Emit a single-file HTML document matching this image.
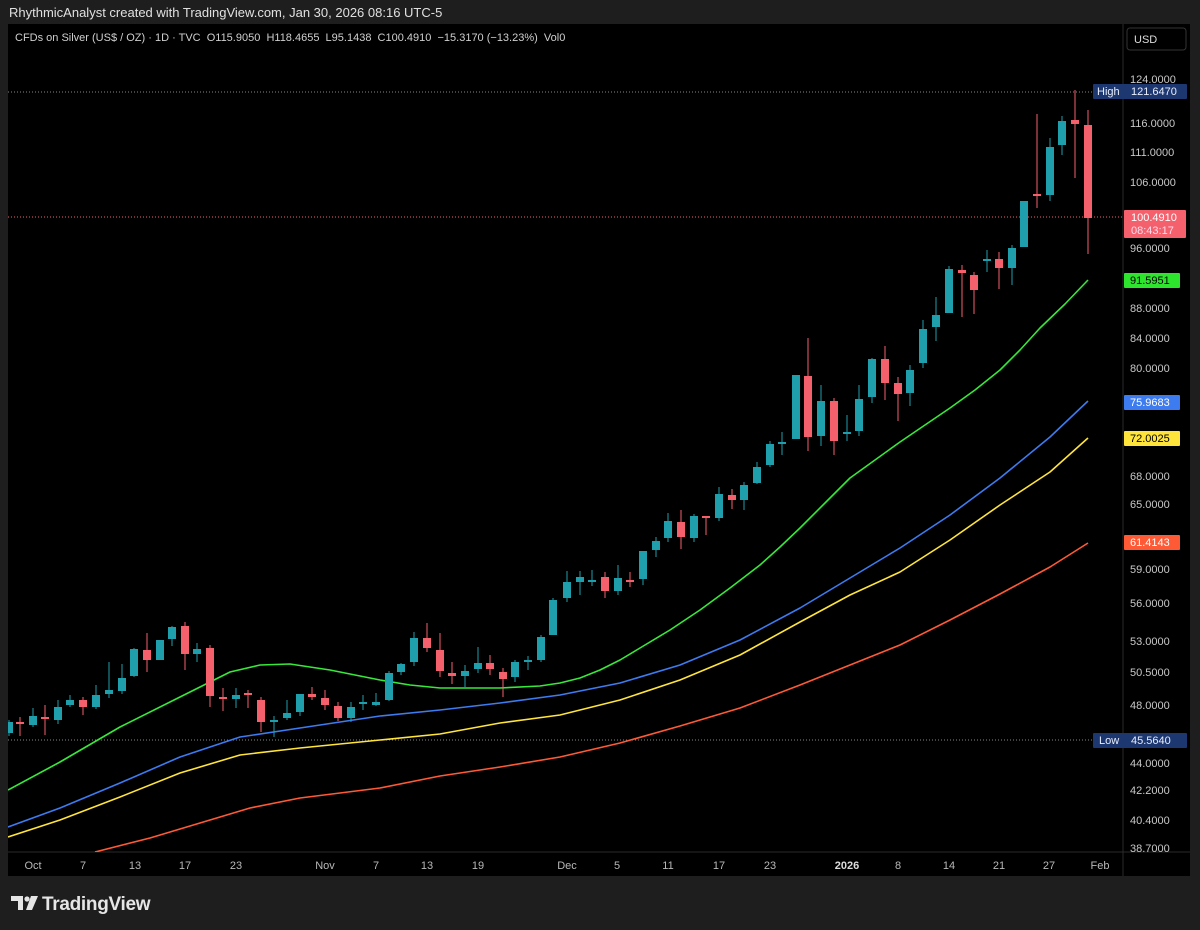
<!DOCTYPE html>
<html><head><meta charset="utf-8"><style>
body{margin:0;width:1200px;height:930px;background:#1e1e1e;overflow:hidden;font-family:"Liberation Sans",sans-serif}
.t{position:absolute;white-space:nowrap}
</style></head><body>
<div class="t" style="left:9px;top:5px;font-size:13px;color:#e0e0e0">RhythmicAnalyst created with TradingView.com, Jan 30, 2026 08:16 UTC-5</div>
<div style="position:absolute;left:8px;top:24px;width:1182px;height:852px;background:#000"></div>
<svg id="c" width="1200" height="930" style="position:absolute;left:0;top:0" xmlns="http://www.w3.org/2000/svg">
<defs><clipPath id="pl"><rect x="8" y="24" width="1115" height="828"/></clipPath></defs>
<line x1="1123" y1="24" x2="1123" y2="876" stroke="#2a2a2a"/>
<line x1="8" y1="852" x2="1190" y2="852" stroke="#2a2a2a"/>
<line x1="8" y1="92" x2="1093" y2="92" stroke="#888" stroke-dasharray="1,2"/>
<line x1="8" y1="217" x2="1123" y2="217" stroke="#f4606c" stroke-dasharray="1,2"/>
<line x1="8" y1="740" x2="1093" y2="740" stroke="#888" stroke-dasharray="1,2"/>
<g fill="none" stroke-width="1.6" clip-path="url(#pl)" stroke-linejoin="round">
<polyline stroke="#ff5a36" points="95,852 150,838 200,823 250,808 300,798 380,788 440,776 500,767 560,757 620,743 680,726 740,708 800,685 850,665 900,645 950,620 1000,594 1050,567 1088,543"/>
<polyline stroke="#ffe53b" points="8,837 60,820 120,797 180,773 240,755 300,748 380,740 440,734 500,723 560,715 620,700 680,680 740,655 800,622 850,595 900,572 950,540 1000,505 1050,472 1088,438"/>
<polyline stroke="#3d7bf0" points="8,827 60,808 120,783 180,757 240,737 300,728 380,716 440,710 500,703 560,695 620,683 680,665 740,640 800,608 850,578 900,548 950,515 1000,478 1050,437 1088,401"/>
<polyline stroke="#37e83a" points="8,790 60,762 120,727 180,697 210,682 230,672 260,665 290,664 330,670 380,680 410,685 440,688 500,688 540,686 560,683 580,678 600,670 620,660 640,648 670,630 700,610 730,588 760,565 780,547 800,528 825,503 850,478 875,460 900,442 925,425 950,408 975,390 1000,370 1020,350 1040,328 1065,304 1088,280"/>
</g>
<g id="cd" clip-path="url(#pl)"></g>
<g font-size="11" fill="#c8c8c8" font-family="Liberation Sans,sans-serif">
<text x="1130" y="83">124.0000</text><text x="1130" y="127">116.0000</text><text x="1130" y="156">111.0000</text><text x="1130" y="186">106.0000</text><text x="1130" y="252">96.0000</text><text x="1130" y="312">88.0000</text><text x="1130" y="342">84.0000</text><text x="1130" y="372">80.0000</text><text x="1130" y="480">68.0000</text><text x="1130" y="508">65.0000</text><text x="1130" y="573">59.0000</text><text x="1130" y="607">56.0000</text><text x="1130" y="645">53.0000</text><text x="1130" y="676">50.5000</text><text x="1130" y="709">48.0000</text><text x="1130" y="767">44.0000</text><text x="1130" y="794">42.2000</text><text x="1130" y="824">40.4000</text><text x="1130" y="852">38.7000</text>
</g>
<rect x="1093" y="84" width="94" height="15" fill="#1d3770" rx="1"/>
<text x="1097" y="95" font-size="11" fill="#e8eefc">High</text><text x="1131" y="95" font-size="11" fill="#e8eefc">121.6470</text>
<rect x="1093" y="733" width="94" height="15" fill="#1d3770" rx="1"/>
<text x="1099" y="744" font-size="11" fill="#e8eefc">Low</text><text x="1131" y="744" font-size="11" fill="#e8eefc">45.5640</text>
<rect x="1124" y="210" width="62" height="28" fill="#f4606c" rx="1"/>
<text x="1131" y="221" font-size="11" fill="#fff">100.4910</text><text x="1131" y="234" font-size="11" fill="#fde">08:43:17</text>
<rect x="1124" y="273" width="56" height="15" fill="#2ee52e" rx="1"/><text x="1130" y="284" font-size="11" fill="#000">91.5951</text>
<rect x="1124" y="395" width="56" height="15" fill="#3d7bf0" rx="1"/><text x="1130" y="406" font-size="11" fill="#fff">75.9683</text>
<rect x="1124" y="431" width="56" height="15" fill="#ffe53b" rx="1"/><text x="1130" y="442" font-size="11" fill="#000">72.0025</text>
<rect x="1124" y="535" width="56" height="15" fill="#ff5a36" rx="1"/><text x="1130" y="546" font-size="11" fill="#fff">61.4143</text>
<rect x="1127" y="28" width="59" height="22" fill="#000" stroke="#333" rx="3"/>
<text x="1134" y="43" font-size="11" fill="#ddd">USD</text>
<g font-size="11" fill="#b8b8b8" text-anchor="middle">
<text x="33" y="869">Oct</text><text x="83" y="869">7</text><text x="135" y="869">13</text><text x="185" y="869">17</text><text x="236" y="869">23</text><text x="325" y="869">Nov</text><text x="376" y="869">7</text><text x="427" y="869">13</text><text x="478" y="869">19</text><text x="567" y="869">Dec</text><text x="617" y="869">5</text><text x="668" y="869">11</text><text x="719" y="869">17</text><text x="770" y="869">23</text><text x="847" y="869" font-weight="bold" fill="#ddd">2026</text><text x="898" y="869">8</text><text x="949" y="869">14</text><text x="999" y="869">21</text><text x="1049" y="869">27</text><text x="1100" y="869">Feb</text>
</g>
<g fill="#e6e6e6">
<path d="M11 896h12v14h-5v-9h-7z"/><circle cx="27" cy="899" r="2.6"/><path d="M31 896h7l-6 14h-6z"/>
</g>
<text x="42" y="910" font-size="19" font-weight="bold" fill="#e6e6e6" letter-spacing="-0.3">TradingView</text>
</svg>
<div class="t" style="left:15px;top:32px;font-size:11px;color:#cfcfcf">CFDs on Silver (US$ / OZ) · 1D · TVC &nbsp;O115.9050 &nbsp;H118.4655 &nbsp;L95.1438 &nbsp;C100.4910 &nbsp;−15.3170 (−13.23%) &nbsp;Vol0</div>
<script>
var d=[[9,733,722,720,736],[20,722,724,717,736],[33,725,716,708,727],[45,717,719,705,735],[58,720,707,700,724],[70,705,700,695,707],[83,700,707,697,715],[96,707,695,685,709],[109,694,690,662,698],[122,691,678,664,694],[134,676,649,648,677],[147,650,660,633,672],[160,660,640,640,660],[172,639,627,626,646],[185,626,654,622,670],[197,654,649,643,662],[210,648,696,645,707],[223,697,699,688,711],[236,699,695,688,708],[248,693,695,690,708],[261,700,722,697,732],[274,722,720,716,737],[287,718,713,700,720],[300,712,694,694,716],[312,694,697,687,700],[325,698,705,690,710],[338,706,718,702,721],[351,718,707,702,722],[363,703,702,695,710],[376,705,702,693,706],[389,700,673,671,701],[401,672,664,663,675],[414,662,638,632,666],[427,638,648,623,652],[440,650,671,633,677],[452,673,676,662,684],[465,676,671,665,687],[478,669,663,647,673],[490,663,669,655,675],[503,672,679,668,697],[515,677,662,660,682],[528,661,660,656,670],[541,660,637,635,662],[553,635,600,598,635],[567,598,582,571,602],[580,582,577,571,595],[592,581,580,570,586],[605,577,591,572,598],[618,591,578,565,595],[630,580,581,572,587],[643,579,551,551,585],[656,550,541,537,557],[668,538,521,513,542],[681,522,537,510,549],[694,538,516,514,542],[706,516,518,516,535],[719,518,494,487,521],[732,495,500,489,509],[744,500,485,482,510],[757,483,467,462,484],[770,465,444,441,467],[782,443,442,432,455],[796,439,375,375,439],[808,376,437,338,451],[821,436,401,385,446],[834,401,441,398,455],[847,433,432,415,441],[859,431,399,385,436],[872,397,359,358,403],[885,359,383,346,400],[898,383,394,377,421],[910,393,370,365,406],[923,363,329,320,368],[936,327,315,297,341],[949,313,269,266,313],[962,270,273,265,317],[974,275,290,272,314],[987,260,259,250,272],[999,259,268,252,289],[1012,268,248,245,285],[1024,247,201,201,247],[1037,194,196,114,208],[1050,195,147,138,201],[1062,145,121,116,155],[1075,120,124,90,178],[1088,125,218,110,254]];
var s='';d.forEach(function(c){var up=c[2]<c[1];var col=up?'#1f9eab':'#f4606c';var t=Math.min(c[1],c[2]),h=Math.max(2,Math.abs(c[2]-c[1]));
s+='<line x1="'+c[0]+'" y1="'+c[3]+'" x2="'+c[0]+'" y2="'+c[4]+'" stroke="'+col+'" stroke-width="1"/><rect x="'+(c[0]-4)+'" y="'+t+'" width="8" height="'+h+'" fill="'+col+'"/>';});
document.getElementById('cd').innerHTML=s;
</script>
</body></html>
